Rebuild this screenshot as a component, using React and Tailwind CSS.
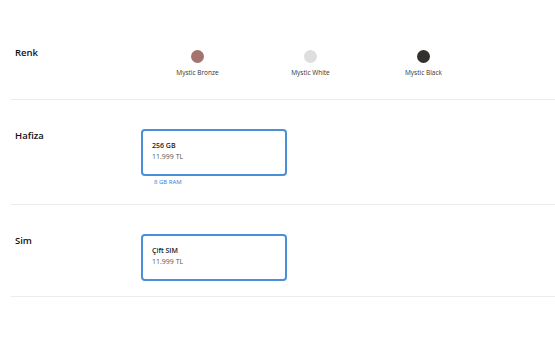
import React from "react";

const colors = [
  { name: "Mystic Bronze", hex: "bg-[#a2736f]" },
  { name: "Mystic White", hex: "bg-[#dedede]" },
  { name: "Mystic Black", hex: "bg-[#34302e]" },
];

function OptionCard({ title, price }) {
  return (
    <div className="w-[146px] h-[47px] border-2 border-[#4a90d9] rounded-[4px] pl-[9px] pt-[10px]">
      <p className="text-[7px] leading-[10px] font-semibold text-[#1a1a1a]">{title}</p>
      <p className="text-[7px] leading-[11px] text-[#555]">{price}</p>
    </div>
  );
}

export default function App() {
  return (
    <div className="w-[555px] h-[355px] bg-white pl-[11px] font-['Open_Sans',sans-serif] text-[#111]">
      {/* Renk */}
      <div className="h-[100px] flex border-b border-[#ececec] pt-[46px]">
        <div className="w-[130px] pl-[4px] text-[9.5px] leading-[13px] font-semibold">Renk</div>
        <div className="flex mt-[4px]">
          {colors.map((c) => (
            <div key={c.name} className="w-[113px] flex flex-col items-center">
              <div className={`w-[13px] h-[13px] rounded-full ${c.hex}`}></div>
              <span className="mt-[5px] text-[6.5px] leading-[10px] text-[#333]">{c.name}</span>
            </div>
          ))}
        </div>
      </div>

      {/* Hafiza */}
      <div className="h-[105px] flex border-b border-[#ececec] pt-[29px]">
        <div className="w-[130px] pl-[4px] text-[9.5px] leading-[13px] font-semibold">Hafiza</div>
        <div>
          <OptionCard title="256 GB" price="11.999 TL" />
          <p className="mt-[2px] ml-[13px] text-[6px] leading-[9px] text-[#2f7fd4]">8 GB RAM</p>
        </div>
      </div>

      {/* Sim */}
      <div className="h-[92px] flex border-b border-[#ececec] pt-[29px]">
        <div className="w-[130px] pl-[4px] text-[9.5px] leading-[13px] font-semibold">Sim</div>
        <OptionCard title="Çift SIM" price="11.999 TL" />
      </div>
    </div>
  );
}
